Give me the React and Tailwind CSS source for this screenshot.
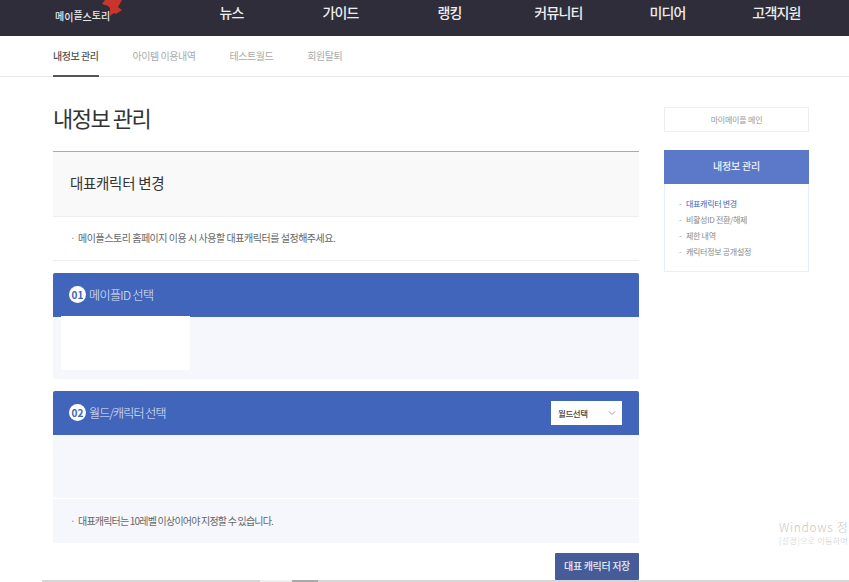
import React from 'react'
import { ChevronDown } from 'lucide-react'

const topMenu = ['뉴스', '가이드', '랭킹', '커뮤니티', '미디어', '고객지원']

const tabs = [
  { label: '내정보 관리', active: true },
  { label: '아이템 이용내역' },
  { label: '테스트월드' },
  { label: '회원탈퇴' },
]

const sideLinks = ['대표캐릭터 변경', '비활성ID 전환/해제', '제한 내역', '캐릭터정보 공개설정']

// the logo letters sit on a wavy baseline
const logoLetters = [
  { ch: '메', cls: 'translate-y-[0px]' },
  { ch: '이', cls: 'translate-y-[1px]' },
  { ch: '플', cls: 'translate-y-[-1px]' },
  { ch: '스', cls: 'translate-y-[1px]' },
  { ch: '토', cls: 'translate-y-[-1px]' },
  { ch: '리', cls: 'translate-y-[0px]' },
]

const Note = ({ children, className }) => (
  <p className={`flex items-center text-[10px] text-[#666] ${className}`}>
    <span className="w-[8px] text-[#999]">·</span>
    {children}
  </p>
)

const StepHeader = ({ num, title, titleClass, children }) => (
  <div className="flex h-[44px] items-center justify-between rounded-t-[2px] bg-[#4165bb] pl-4 pr-[17px]">
    <div className="flex items-center gap-[3px] pb-[1px]">
      <span className="flex h-[17px] w-[17px] items-center justify-center rounded-full bg-white text-[10px] font-bold text-[#4165bb]">{num}</span>
      <span className={`text-[12px] font-light text-[#e8ecf8] ${titleClass}`}>{title}</span>
    </div>
    {children}
  </div>
)

export default function App() {
  return (
    <div className="relative h-[582px] w-[849px] overflow-hidden bg-white font-['Noto_Sans_CJK_KR','Noto_Sans',sans-serif]">
      <header className="flex h-[36px] bg-[#2e2d39]">
        <div className="relative w-[177px] pl-[55px]">
          <svg className="absolute left-[102px] top-0" width="20" height="17" viewBox="0 0 20 17">
            <path d="M3 0 L0 4 L6 6 L8 8 L8 16 L12 13 L14 14 L20 10 L16 7 L20 0 Z" fill="#c9352a" />
          </svg>
          <div className="relative flex pt-[8px] text-[10px] font-medium text-[#e8e8e8]">
            {logoLetters.map((l) => (
              <span key={l.ch} className={`w-[9.2px] ${l.cls}`}>{l.ch}</span>
            ))}
          </div>
        </div>
        <nav className="flex">
          {topMenu.map((item) => (
            <a key={item} className="w-[109px] pt-[2px] text-center text-[14px] font-medium leading-[20px] tracking-[-0.8px] text-[#eeeeee]">
              {item}
            </a>
          ))}
        </nav>
      </header>

      <div className="h-[41px] border-b border-[#e8e8e8] bg-white">
        <div className="flex h-[40px] gap-[34px] pl-[53px]">
          {tabs.map((tab) => (
            <a
              key={tab.label}
              className={`pt-[12px] text-[10px] leading-[15px] tracking-[-0.45px] ${tab.active ? 'h-[41px] border-b-[2px] border-[#555] font-medium text-[#555]' : 'text-[#aaa]'}`}
            >
              {tab.label}
            </a>
          ))}
        </div>
      </div>

      <main className="flex pl-[53px] pt-[24px]">
        <div className="w-[586px]">
          <h1 className="text-[22px] leading-[33px] tracking-[-1.5px] text-[#333]">내정보 관리</h1>

          <div className="mt-[17px] flex h-[65px] items-center border-t border-[#aaa] bg-[#f9f9f9] pb-[2px] pl-[17px]">
            <h2 className="text-[14.5px] tracking-[-0.3px] text-[#333]">대표캐릭터 변경</h2>
          </div>
          <div className="flex h-[45px] items-center border-y border-[#eeeeee] pb-[2px] pl-[17px]">
            <Note className="tracking-[-0.47px]">메이플스토리 홈페이지 이용 시 사용할 대표캐릭터를 설정해주세요.</Note>
          </div>

          <section className="mt-[12px]">
            <StepHeader num="01" title="메이플ID 선택" titleClass="tracking-[-0.6px]" />
            <div className="flow-root h-[62px] bg-[#f5f7fc] pl-[8px]">
              <div className="-mt-px h-[54px] w-[129px] bg-white" />
            </div>
          </section>

          <section className="mt-[12px]">
            <StepHeader num="02" title="월드/캐릭터 선택" titleClass="tracking-[-0.9px]">
              <div className="flex h-[24px] w-[71px] items-center justify-between bg-white pl-[7px] pr-[4px]">
                <span className="text-[8.5px] font-medium tracking-[-0.4px] text-[#444]">월드선택</span>
                <ChevronDown size={12} strokeWidth={1.25} className="text-[#666]" />
              </div>
            </StepHeader>
            <div className="h-[63px] bg-[#f5f7fc]" />
            <div className="mt-[1px] flex h-[44px] items-center bg-[#f5f7fc] pb-[2px] pl-[17px]">
              <Note className="tracking-[-0.8px]">대표캐릭터는 10레벨 이상이어야 지정할 수 있습니다.</Note>
            </div>
          </section>

          <div className="mt-[10px] flex justify-end">
            <button className="h-[27px] w-[84px] rounded-[1px] bg-[#465c99] pb-[2px] text-[10px] font-medium tracking-[-0.35px] text-[#e8ebf4]">
              대표 캐릭터 저장
            </button>
          </div>
        </div>

        <aside className="ml-[25px] w-[145px] pt-[6px]">
          <a className="flex h-[25px] items-center justify-center border border-[#eeeeee] text-[8px] tracking-[-0.2px] text-[#999]">
            마이메이플 메인
          </a>
          <div className="mt-[18px] flex h-[34px] items-center justify-center bg-[#5c79c9] pb-[3px] text-[10px] font-medium tracking-[-0.2px] text-[#eef1fa]">
            내정보 관리
          </div>
          <ul className="flex h-[88px] flex-col gap-[1px] border border-t-0 border-[#e6f0fa] pl-[14px] pt-[12px]">
            {sideLinks.map((link, i) => (
              <li key={link} className={`flex h-[15px] items-center text-[8px] tracking-[-0.3px] ${i === 0 ? 'text-[#4165bb]' : 'text-[#888]'}`}>
                <span className="w-[7px] text-[#999]">-</span>
                {link}
              </li>
            ))}
          </ul>
        </aside>
      </main>

      {/* windows activation watermark */}
      <div className="absolute left-[779px] top-[519px] whitespace-nowrap font-light text-[#c8c8c8]">
        <p className="text-[12px] leading-[16px] tracking-[0.7px]">Windows 정품 인증</p>
        <p className="text-[8px] leading-[12px] tracking-[0.3px]">[설정]으로 이동하여 Windows를 정품 인증합니다.</p>
      </div>

      {/* browser scrollbar */}
      <div className="absolute bottom-0 left-0 flex h-[2px] w-full bg-[#d6d6d6]">
        <div className="h-full w-[42px] bg-white" />
        <div className="ml-[218px] h-full w-[32px] bg-[#efefef]" />
        <div className="h-full w-[26px] bg-[#a9a9a9]" />
      </div>
    </div>
  )
}
